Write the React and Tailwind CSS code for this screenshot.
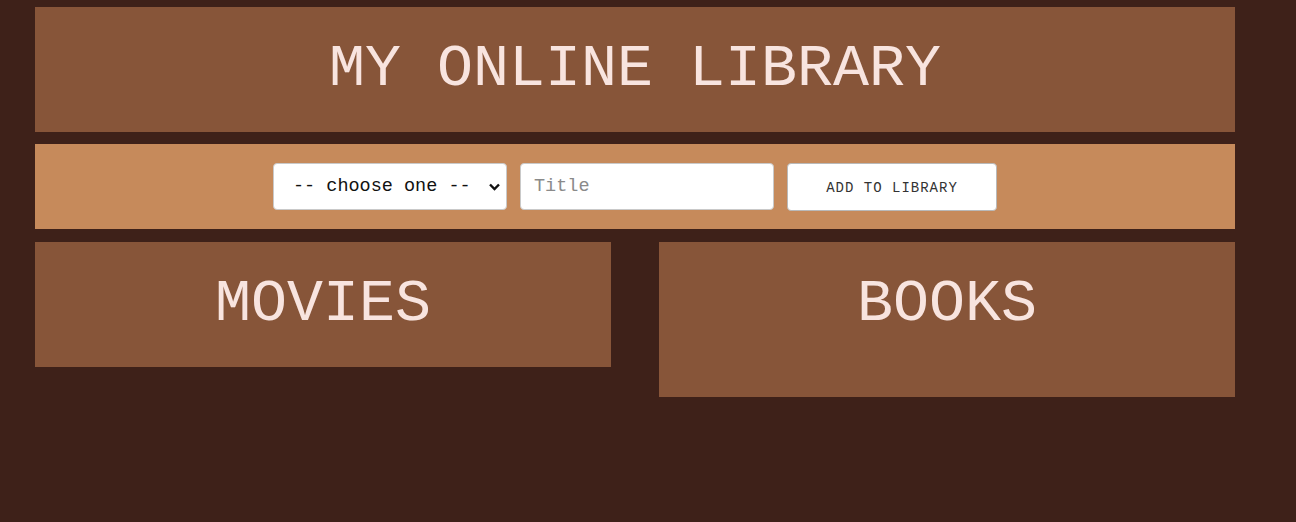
import React, { useState } from 'react';

const mono = 'font-["Liberation_Mono","Courier_New",monospace]';

const Panel = ({ title, extra }) => (
  <section className={`w-[576px] bg-[#875539] ${extra}`}>
    <h2 className="h-[125px] flex items-center justify-center text-[60px] leading-none text-[#f8e4df] pb-[2px]">
      {title}
    </h2>
  </section>
);

const App = () => {
  const [kind, setKind] = useState('');
  const [title, setTitle] = useState('');

  return (
    <div className={`min-h-[522px] bg-[#3e2119] pt-[7px] ${mono}`}>
      <div className="w-[1200px] ml-[35px]">
        <header className="h-[125px] bg-[#875539] flex items-center justify-center">
          <h1 className="text-[60px] leading-none text-[#f8e4df] pb-[2px]">MY ONLINE LIBRARY</h1>
        </header>

        <form
          className="mt-[12px] h-[85px] bg-[#c68a5b] flex items-center justify-center gap-[13px]"
          onSubmit={(e) => e.preventDefault()}
        >
          <div className="relative">
            <select
              value={kind}
              onChange={(e) => setKind(e.target.value)}
              className="appearance-none w-[234px] h-[47px] bg-white border border-[#c9c9c9] rounded-[4px] pl-[19px] text-[18.5px] text-[#111] outline-none"
            >
              <option value="">-- choose one --</option>
              <option value="movie">Movie</option>
              <option value="book">Book</option>
            </select>
            <svg
              className="absolute right-[7px] top-[20px] w-[11px] h-[8px] pointer-events-none"
              viewBox="0 0 11 8"
              fill="none"
              stroke="#111"
              strokeWidth="2.4"
            >
              <path d="M1 1.5l4.5 4.5 4.5-4.5" />
            </svg>
          </div>
          <input
            type="text"
            value={title}
            onChange={(e) => setTitle(e.target.value)}
            placeholder="Title"
            className="w-[254px] h-[47px] bg-white border border-[#c9c9c9] rounded-[4px] px-[13px] text-[18.5px] text-[#111] placeholder:text-[#8a8a8a] outline-none"
          />
          <button
            type="submit"
            className="w-[210px] h-[48px] bg-white border border-[#b9b9b9] rounded-[4px] pt-[3px] text-[14px] tracking-[1px] text-[#333] font-medium"
          >
            ADD TO LIBRARY
          </button>
        </form>

        <div className="mt-[13px] flex justify-between items-start">
          <Panel title="MOVIES" extra="" />
          <Panel title="BOOKS" extra="pb-[30px]" />
        </div>
      </div>
    </div>
  );
};

export default App;
